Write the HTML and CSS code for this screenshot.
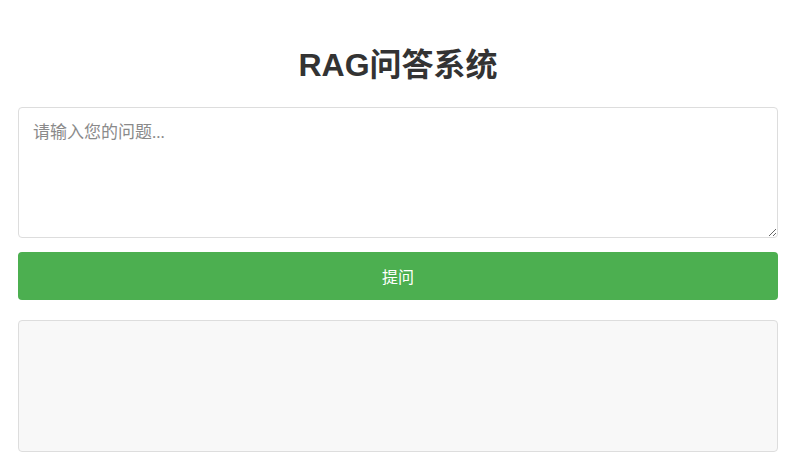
FILE: index.html
```html
<!DOCTYPE html>
<html lang="zh">
<head>
<meta charset="utf-8">
<title>RAG问答系统</title>
<link rel="stylesheet" href="styles.css">
</head>
<body>
<div class="container">
  <h1 class="title">RAG问答系统</h1>
  <textarea class="question" placeholder="请输入您的问题..."></textarea>
  <button class="ask">提问</button>
  <div class="answer"></div>
</div>
</body>
</html>
```
FILE: styles.css
```css
html, body {
  margin: 0;
  padding: 0;
  background: #ffffff;
}
.container {
  width: 760px;
  margin-left: 18px;
  padding-top: 45px;
  display: flex;
  flex-direction: column;
  font-family: "Liberation Sans", Arial, "Noto Sans CJK SC", sans-serif;
}
.title {
  margin: 0 0 22px 0;
  text-align: center;
  font-size: 32px;
  line-height: 40px;
  font-weight: bold;
  color: #333333;
}
.question {
  box-sizing: border-box;
  width: 760px;
  height: 131px;
  margin: 0;
  padding: 10px 14px;
  border: 1px solid #dddddd;
  border-radius: 4px;
  font-family: "Liberation Serif", "Noto Sans CJK SC", serif;
  font-size: 17px;
  color: #333;
  resize: vertical;
}
.question::placeholder {
  color: #8a8a8a;
}
.ask {
  margin-top: 14px;
  height: 48px;
  width: 760px;
  border: none;
  border-radius: 4px;
  background: #4caf50;
  color: #ffffff;
  font-family: "Liberation Sans", "Noto Sans CJK SC", sans-serif;
  font-size: 16px;
  cursor: pointer;
}
.answer {
  box-sizing: border-box;
  margin-top: 20px;
  height: 132px;
  border: 1px solid #dddddd;
  border-radius: 4px;
  background: #f8f8f8;
}
```
